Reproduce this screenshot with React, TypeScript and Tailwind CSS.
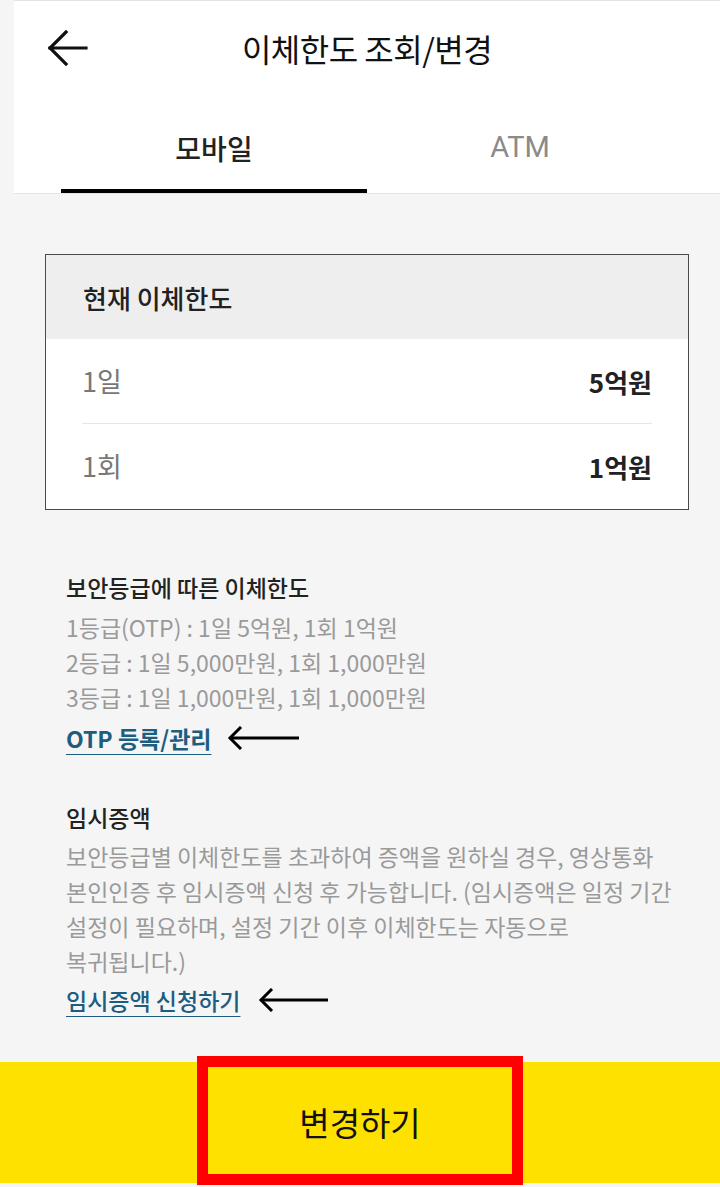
import React from 'react';

const FONT = { fontFamily: '"Noto Sans CJK KR", "Noto Sans", sans-serif' };

function BackArrow() {
  return (
    <svg width="42" height="36" viewBox="0 0 42 36" fill="none" stroke="#111" strokeWidth="3.2" strokeLinecap="square">
      <path d="M3 18 H39" />
      <path d="M19 2 L3 18 L19 34" strokeLinejoin="miter" />
    </svg>
  );
}

function PointerArrow({ width = 72 }: { width?: number }) {
  return (
    <svg width={width} height="24" viewBox={`0 0 ${width} 24`} fill="none" stroke="#000" strokeWidth="3">
      <path d={`M3 12 H${width}`} />
      <path d="M14 1 L3 12 L14 23" />
    </svg>
  );
}

const limits = [
  { label: '1일', value: '5억원' },
  { label: '1회', value: '1억원' },
];

const grades = [
  '1등급(OTP) : 1일 5억원, 1회 1억원',
  '2등급 : 1일 5,000만원, 1회 1,000만원',
  '3등급 : 1일 1,000만원, 1회 1,000만원',
];

const noticeLines = [
  '보안등급별 이체한도를 초과하여 증액을 원하실 경우, 영상통화',
  '본인인증 후 임시증액 신청 후 가능합니다. (임시증액은 일정 기간',
  '설정이 필요하며, 설정 기간 이후 이체한도는 자동으로',
  '복귀됩니다.)',
];

export default function App() {
  return (
    <div className="flex h-[1187px] w-[720px] flex-col overflow-hidden bg-[#f5f5f5]" style={FONT}>
      {/* header + tabs */}
      <div className="ml-[14px] border-t border-b border-[#e3e3e3] bg-white">
        <div className="relative flex h-[94px] items-center justify-center">
          <div className="absolute left-[33px] top-[29px]">
            <BackArrow />
          </div>
          <h1 className="text-[32px] font-normal tracking-[-0.5px] text-[#111]">이체한도 조회/변경</h1>
        </div>
        <div className="flex px-[47px]">
          <div className="flex h-[98px] flex-1 items-center justify-center border-b-4 border-black pt-[12px]">
            <span className="text-[28px] font-medium text-[#222]">모바일</span>
          </div>
          <div className="flex h-[98px] flex-1 items-center justify-center pt-[8px]">
            <span className="text-[29px] font-normal text-[#8a8a8a]" style={{ fontFamily: 'Roboto, sans-serif' }}>ATM</span>
          </div>
        </div>
      </div>

      {/* current limits */}
      <div className="ml-[45px] mt-[60px] w-[644px] border border-[#4a4a4a] bg-white">
        <div className="flex h-[84px] items-center bg-[#eeeeee] px-[37px]">
          <span className="text-[26px] font-medium text-[#222]">현재 이체한도</span>
        </div>
        <div className="px-[36px]">
          {limits.map((row, i) => (
            <div
              key={row.label}
              className={`flex h-[85px] items-center justify-between ${i === 0 ? 'border-b border-[#e6e6e6]' : ''}`}
            >
              <span className="text-[27px] text-[#777]">{row.label}</span>
              <span className="text-[26px] font-bold text-[#222]">{row.value}</span>
            </div>
          ))}
        </div>
      </div>

      {/* security grade */}
      <div className="mt-[63px] px-[66px]">
        <h2 className="text-[23px] font-medium leading-[28px] text-[#222]">보안등급에 따른 이체한도</h2>
        <ul className="mt-[9px]">
          {grades.map((g) => (
            <li key={g} className="text-[23px] leading-[35px] text-[#9a9a9a]">
              {g}
            </li>
          ))}
        </ul>
        <div className="mt-[8px] flex items-center gap-[16px]">
          <a className="text-[23px] font-bold leading-[30px] text-[#1c5d80] underline decoration-[#1c5d80] decoration-1 underline-offset-[6px]">
            OTP 등록/관리
          </a>
          <PointerArrow width={72} />
        </div>
      </div>

      {/* temporary increase */}
      <div className="mt-[50px] px-[66px]">
        <h2 className="text-[23px] font-medium leading-[28px] text-[#222]">임시증액</h2>
        <div className="mt-[8px]">
          {noticeLines.map((line) => (
            <p key={line} className="whitespace-nowrap text-[23px] leading-[35px] text-[#9a9a9a]">
              {line}
            </p>
          ))}
        </div>
        <div className="mt-[6px] flex items-center gap-[18px]">
          <a className="text-[23px] font-medium leading-[30px] text-[#1c5d80] underline decoration-[#1c5d80] decoration-1 underline-offset-[6px]">
            임시증액 신청하기
          </a>
          <PointerArrow width={70} />
        </div>
      </div>

      {/* bottom button */}
      <div className="mt-auto mb-[4px] h-[121px] bg-[#ffe100]">
        <div className="relative flex h-full items-center justify-center">
          <span className="text-[33px] font-normal text-[#111]">변경하기</span>
          <div className="absolute left-[197px] top-[-6px] h-[129px] w-[326px] border-[11px] border-[#ff0000]" />
        </div>
      </div>
    </div>
  );
}
